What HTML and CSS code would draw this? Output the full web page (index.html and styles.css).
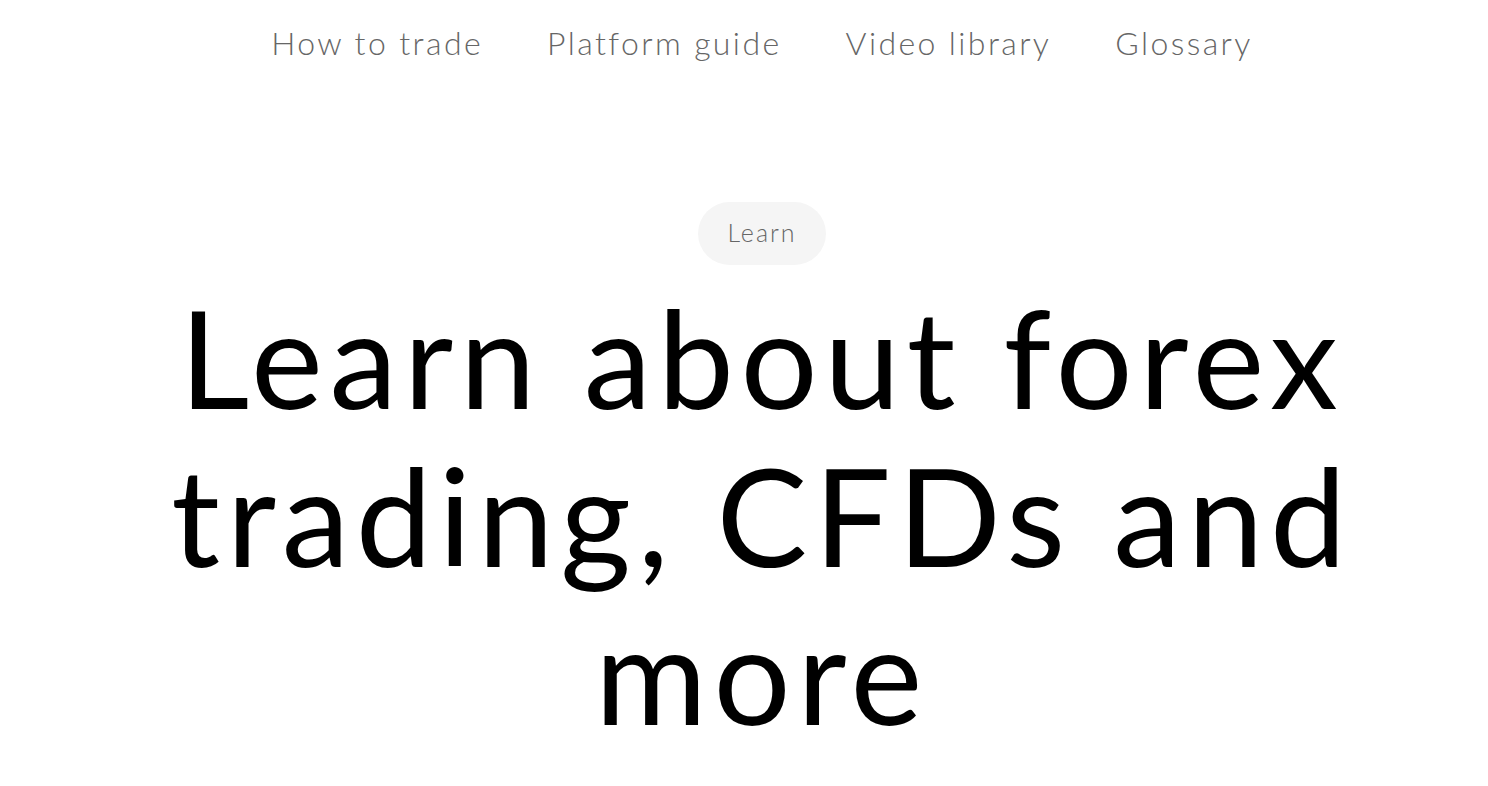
FILE: index.html
```html
<!DOCTYPE html>
<html lang="en">
<head>
<meta charset="utf-8">
<title>Learn</title>
<link rel="stylesheet" href="styles.css">
</head>
<body>
<nav class="nav">
  <a class="nav-link" href="#">How to trade</a>
  <a class="nav-link" href="#">Platform guide</a>
  <a class="nav-link" href="#">Video library</a>
  <a class="nav-link" href="#">Glossary</a>
</nav>
<main class="hero">
  <span class="pill">Learn</span>
  <h1 class="title">Learn about forex trading, CFDs and more</h1>
</main>
</body>
</html>
```
FILE: styles.css
```css
html, body {
  margin: 0;
  padding: 0;
  background: #ffffff;
}
body {
  font-family: "Lato", "Liberation Sans", sans-serif;
  color: #000;
  padding-left: 36px;
}
.nav {
  display: flex;
  justify-content: center;
  gap: 64px;
  padding-top: 21px;
  height: 65px;
}
.nav-link {
  font-size: 32px;
  line-height: 44px;
  letter-spacing: 2.4px;
  color: #666666;
  text-decoration: none;
  font-weight: 300;
}
.hero {
  display: flex;
  flex-direction: column;
  align-items: center;
  padding-top: 116px;
}
.pill {
  display: inline-flex;
  align-items: center;
  justify-content: center;
  height: 63px;
  width: 128px;
  border-radius: 32px;
  background: #f5f5f5;
  color: #666666;
  font-size: 25px;
  font-weight: 300;
  letter-spacing: 2px;
  padding-bottom: 4px;
  box-sizing: border-box;
}
.title {
  margin: 13px 0 0;
  width: 1240px;
  text-align: center;
  font-size: 136px;
  line-height: 158px;
  font-weight: 400;
  letter-spacing: 6.6px;
  color: #000;
}
```
